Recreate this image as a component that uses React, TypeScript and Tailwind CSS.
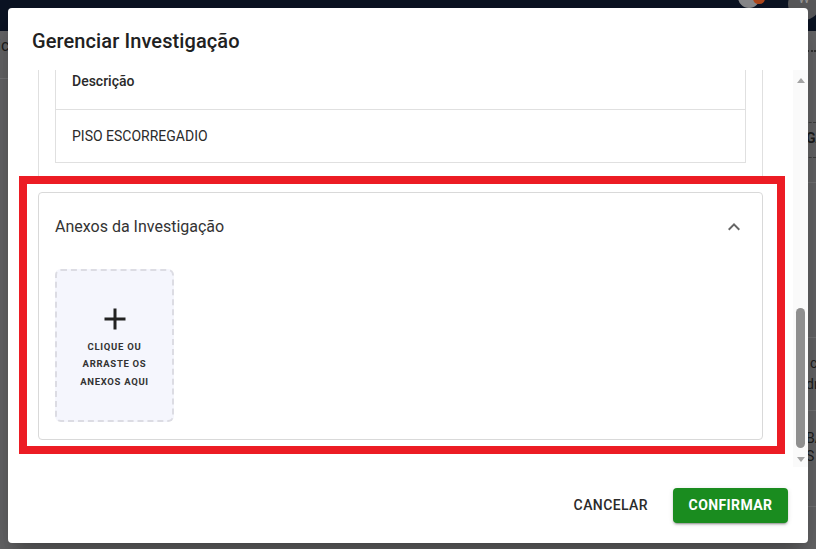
import React from "react";

function ChevronUp() {
  return (
    <svg width="24" height="24" viewBox="0 0 24 24" fill="#666666">
      <path d="M12 8l-6 6 1.41 1.41L12 10.83l4.59 4.58L18 14z" />
    </svg>
  );
}

function PlusIcon() {
  return (
    <svg width="36" height="36" viewBox="0 0 24 24" fill="#222222">
      <path d="M19 13h-6v6h-2v-6H5v-2h6V5h2v6h6v2z" />
    </svg>
  );
}

function Background() {
  return (
    <div className="absolute inset-0 flex flex-col">
      {/* dimmed top bar */}
      <div className="h-[31px] shrink-0 bg-[#0c1424] flex items-start justify-end overflow-hidden">
        <div className="-mt-[14px] w-[22px] h-[22px] rounded-full bg-[#8e8e90] shrink-0" />
        <div className="-mt-[7px] -ml-[7px] w-[12px] h-[11px] rounded-full bg-[#b4491c] shrink-0" />
        <div className="-mt-[12px] ml-[23px] -mr-[4px] w-[32px] h-[32px] rounded-full bg-[#5a5a5c] flex items-end justify-center pb-[12px] text-[13px] text-[#9a9a9a] shrink-0">
          W
        </div>
      </div>
      {/* dimmed page */}
      <div className="flex-1 flex justify-between bg-[#6a6a6c] text-[#1e1e1e]">
        <div className="w-[10px] overflow-hidden flex flex-col">
          <div className="-ml-[3px] mt-[3px] h-[24px] text-[16px] leading-[24px] whitespace-nowrap">ic</div>
          <div className="mt-[20px] h-px bg-[#7c7c7e]" />
        </div>
        <div className="w-[16px] overflow-hidden flex flex-col text-[14px] leading-[18px] whitespace-nowrap">
          <div className="mt-[19px] border-t-2 border-dotted border-[#333]" />
          <div className="mt-[70px] border-t border-dashed border-[#444]" />
          <div className="mt-[6px] pl-[6px] font-bold">GA</div>
          <div className="mt-[10px] border-t border-dashed border-[#444]" />
          <div className="mt-[24px] h-px bg-[#7a7a7c]" />
          <div className="mt-[154px] h-px bg-[#7a7a7c]" />
          <div className="mt-[16px] pl-[10px]">c</div>
          <div className="mt-[3px] pl-[6px]">dr</div>
          <div className="mt-[17px] h-px bg-[#7a7a7c]" />
          <div className="mt-[18px] pl-[6px]">BA</div>
          <div className="pl-[6px]">S</div>
          <div className="mt-[41px] h-px bg-[#7a7a7c]" />
        </div>
      </div>
    </div>
  );
}

export default function App() {
  return (
    <div className="relative w-[816px] h-[549px] overflow-hidden bg-[#6a6a6c] font-['Roboto',sans-serif]">
      <Background />

      {/* Dialog */}
      <div className="absolute left-[8px] top-[8px] w-[800px] h-[535px] bg-white rounded-[4px] flex flex-col overflow-hidden shadow-[0_11px_15px_-7px_rgba(0,0,0,0.2),0_24px_38px_3px_rgba(0,0,0,0.14),0_9px_46px_8px_rgba(0,0,0,0.12)]">
        {/* Title */}
        <div className="h-[62px] shrink-0 px-[24px] pt-[17px]">
          <h2 className="text-[20px] leading-[32px] font-medium text-[#212121] tracking-[0.1px]">
            Gerenciar Investigação
          </h2>
        </div>

        {/* Content + scrollbar */}
        <div className="h-[397px] shrink-0 flex">
          <div className="w-[785px] h-full overflow-hidden">
            <div className="px-[30px] -mt-[34px]">
              {/* Previous panel */}
              <div className="border border-[#e0e0e0] rounded-[4px] p-[16px]">
                <div className="border border-[#e0e0e0]">
                  <div className="h-[56px] flex items-center px-[16px] border-b border-[#e0e0e0] text-[14px] font-medium text-[#2a2a2a]">
                    Descrição
                  </div>
                  <div className="h-[52px] flex items-center px-[16px] text-[14px] text-[#2a2a2a]">
                    PISO ESCORREGADIO
                  </div>
                </div>
              </div>

              {/* Accordion */}
              <div className="mt-[12px] border border-[#d9d9d9] rounded-[4px]">
                <div className="h-[67px] flex items-center justify-between px-[16px]">
                  <span className="text-[16px] text-[#333333]">Anexos da Investigação</span>
                  <ChevronUp />
                </div>
                <div className="pt-[9px] pb-[17px] px-[16px]">
                  <div className="w-[119px] h-[153px] rounded-[6px] border-2 border-dashed border-[#dcdce3] bg-[#f5f6fd] flex flex-col items-center justify-center">
                    <PlusIcon />
                    <div className="mt-[1px] text-center text-[9.5px] leading-[17.5px] font-bold tracking-[0.7px] text-[#333333]">
                      <div>CLIQUE OU</div>
                      <div>ARRASTE OS</div>
                      <div>ANEXOS AQUI</div>
                    </div>
                  </div>
                </div>
              </div>
              <div className="h-[40px]" />
            </div>
          </div>

          {/* Scrollbar */}
          <div className="w-[15px] h-full bg-[#fafafa] flex flex-col items-center">
            <svg className="mt-[8px] shrink-0" width="8" height="5" viewBox="0 0 8 5">
              <path d="M4 0L8 5H0z" fill="#a3a3a3" />
            </svg>
            <div className="mt-[225px] w-[9px] h-[140px] rounded-full bg-[#8f8f8f] shrink-0" />
            <svg className="mt-[9px] shrink-0" width="8" height="5" viewBox="0 0 8 5">
              <path d="M0 0H8L4 5z" fill="#a3a3a3" />
            </svg>
          </div>
        </div>

        {/* Footer */}
        <div className="flex-1 flex items-center justify-end pr-[20px] gap-[17px]">
          <button className="h-[35px] px-[8px] text-[14px] font-medium tracking-[0.4px] text-[#2b2b2b]">
            CANCELAR
          </button>
          <button className="h-[35px] w-[115px] rounded-[4px] bg-[#1a8c1f] text-white text-[14px] font-bold tracking-[0.4px] shadow-[0_3px_1px_-2px_rgba(0,0,0,0.2),0_2px_2px_0_rgba(0,0,0,0.14),0_1px_5px_0_rgba(0,0,0,0.12)]">
            CONFIRMAR
          </button>
        </div>
      </div>

      {/* Red annotation box */}
      <div className="absolute left-[19px] top-[176px] w-[766px] h-[278px] border-[8px] border-[#ec1c24] pointer-events-none" />
    </div>
  );
}
